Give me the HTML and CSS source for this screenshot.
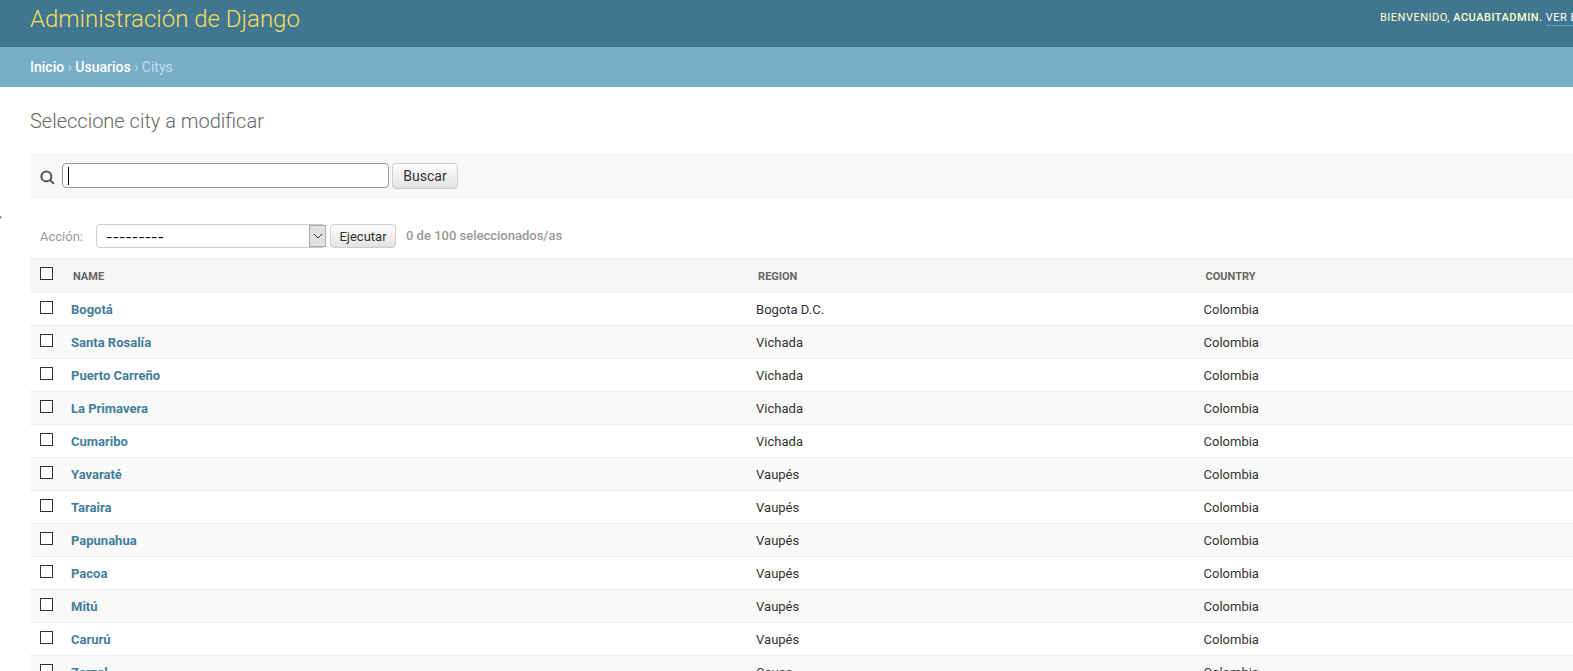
FILE: index.html
```html
<!DOCTYPE html>
<html lang="es">
<head>
<meta charset="utf-8">
<title>Seleccione city a modificar</title>
<link rel="stylesheet" href="styles.css">
</head>
<body>
<header class="header">
  <div class="site-name">Administración de Django</div>
  <div class="user-tools">Bienvenido, <strong>acuabitadmin.</strong> <a href="#">Ver el sitio</a></div>
</header>
<nav class="breadcrumbs"><a href="#">Inicio</a> › <a href="#">Usuarios</a> › Citys</nav>
<main class="content">
  <h1 class="title">Seleccione city a modificar</h1>
  <form class="toolbar">
    <label class="search-label" for="searchbar" aria-label="Buscar">
      <svg class="search-icon" viewBox="0 0 16 16" aria-hidden="true"><circle cx="6.8" cy="6.8" r="5.3"/><path d="M10.5 10.5l4.3 4.3"/></svg>
    </label>
    <span class="search-field">
      <input class="search-input" id="searchbar" type="text">
      <span class="caret"></span>
    </span>
    <button class="button search-button" type="button">Buscar</button>
  </form>
  <div class="actions">
    <label class="action-label" for="action">Acción:</label>
    <span class="select-wrap">
      <select class="action-select" id="action"><option>---------</option></select>
      <span class="select-arrow"><svg viewBox="0 0 10 6" aria-hidden="true"><path d="M1 1l4 4 4-4"/></svg></span>
    </span>
    <button class="button run-button" type="button">Ejecutar</button>
    <span class="counter">0 de 100 seleccionados/as</span>
  </div>
  <table class="results">
    <colgroup><col class="col-check"><col class="col-name"><col class="col-region"><col></colgroup>
    <thead>
      <tr><th><input class="check" type="checkbox" aria-label="Seleccionar todo"></th><th>Name</th><th>Region</th><th>Country</th></tr>
    </thead>
    <tbody>
      <tr><td><input class="check" type="checkbox" aria-label="Bogotá"></td><th><a href="#">Bogotá</a></th><td>Bogota D.C.</td><td>Colombia</td></tr>
      <tr><td><input class="check" type="checkbox" aria-label="Santa Rosalía"></td><th><a href="#">Santa Rosalía</a></th><td>Vichada</td><td>Colombia</td></tr>
      <tr><td><input class="check" type="checkbox" aria-label="Puerto Carreño"></td><th><a href="#">Puerto Carreño</a></th><td>Vichada</td><td>Colombia</td></tr>
      <tr><td><input class="check" type="checkbox" aria-label="La Primavera"></td><th><a href="#">La Primavera</a></th><td>Vichada</td><td>Colombia</td></tr>
      <tr><td><input class="check" type="checkbox" aria-label="Cumaribo"></td><th><a href="#">Cumaribo</a></th><td>Vichada</td><td>Colombia</td></tr>
      <tr><td><input class="check" type="checkbox" aria-label="Yavaraté"></td><th><a href="#">Yavaraté</a></th><td>Vaupés</td><td>Colombia</td></tr>
      <tr><td><input class="check" type="checkbox" aria-label="Taraira"></td><th><a href="#">Taraira</a></th><td>Vaupés</td><td>Colombia</td></tr>
      <tr><td><input class="check" type="checkbox" aria-label="Papunahua"></td><th><a href="#">Papunahua</a></th><td>Vaupés</td><td>Colombia</td></tr>
      <tr><td><input class="check" type="checkbox" aria-label="Pacoa"></td><th><a href="#">Pacoa</a></th><td>Vaupés</td><td>Colombia</td></tr>
      <tr><td><input class="check" type="checkbox" aria-label="Mitú"></td><th><a href="#">Mitú</a></th><td>Vaupés</td><td>Colombia</td></tr>
      <tr><td><input class="check" type="checkbox" aria-label="Carurú"></td><th><a href="#">Carurú</a></th><td>Vaupés</td><td>Colombia</td></tr>
      <tr><td><input class="check" type="checkbox" aria-label="Zarzal"></td><th><a href="#">Zarzal</a></th><td>Cauca</td><td>Colombia</td></tr>
    </tbody>
  </table>
</main>
<svg class="pointer" viewBox="0 0 3 4" aria-hidden="true"><path d="M0 .5L2 2.5V3.5H0"/></svg>
</body>
</html>
```
FILE: styles.css
```css
* { box-sizing: border-box; }
html, body { height: 100%; }
body {
  margin: 0;
  overflow: hidden;
  background: #fff;
  color: #333;
  font: 13px/16px Roboto, "Liberation Sans", sans-serif;
}
a { color: #447e9b; text-decoration: none; }

.header {
  display: flex;
  justify-content: space-between;
  align-items: flex-start;
  padding: 4px 0 13px 30px;
  background: #417690;
  color: #ffc;
}
.site-name { color: #f5dd5d; font-size: 24px; font-weight: 300; line-height: 30px; }
.user-tools {
  flex: 0 0 193px;
  overflow: hidden;
  padding: 6px 0 2px;
  font-size: 11px;
  letter-spacing: 0.5px;
  text-transform: uppercase;
  white-space: nowrap;
}
.user-tools strong { font-weight: 500; }
.user-tools a { padding-bottom: 1px; color: #fff; border-bottom: 1px solid rgba(255, 255, 255, 0.25); }

.breadcrumbs { padding: 12px 30px; background: #79aec8; color: #c4dce8; font-size: 14px; }
.breadcrumbs a { color: #fff; font-weight: 500; }

.content { padding: 22px 0 0 30px; }
.title { margin: 0 0 21px; color: #666; font-size: 20px; font-weight: 300; line-height: 24px; }

.toolbar {
  display: flex;
  align-items: flex-start;
  margin: 0 0 26px;
  padding: 8px 10px;
  border-top: 1px solid #eee;
  border-bottom: 1px solid #eee;
  background: #f8f8f8;
}
.search-label { display: flex; width: 22px; padding-top: 7px; }
.search-icon { width: 15px; height: 15px; fill: none; stroke: #555; stroke-width: 2.2; }
.search-field { position: relative; display: flex; margin-right: 3px; }
.search-input {
  width: 327px;
  height: 25px;
  padding: 2px 5px;
  border: 1px solid #999;
  border-radius: 4px;
  background: #fff;
  font: inherit;
}
.caret { position: absolute; top: 4px; left: 6px; width: 1px; height: 18px; background: #000; }
.button {
  width: 66px;
  padding: 0;
  border: 1px solid #ccc;
  border-radius: 4px;
  background: linear-gradient(#fff, #e2e2e2);
  color: #333;
  font-family: inherit;
}
.search-button { height: 26px; font-size: 14px; }
.run-button { height: 24px; font-size: 13px; }

.actions { display: flex; align-items: center; padding: 0 10px 10px; color: #999; }
.action-label { width: 56px; padding-top: 2px; }
.select-wrap { position: relative; display: flex; margin-right: 4px; }
.action-select {
  appearance: none;
  width: 230px;
  height: 24px;
  padding: 0 24px 0 9px;
  border: 1px solid #ccc;
  border-radius: 4px;
  background: #fff;
  color: #000;
  font: 14px Inter, sans-serif;
}
.select-arrow {
  position: absolute;
  top: 1px;
  right: 0;
  bottom: 1px;
  display: grid;
  place-items: center;
  width: 17px;
  border: 1px solid #aaa;
  background: #e1e1e1;
  pointer-events: none;
}
.select-arrow svg { width: 10px; height: 6px; fill: none; stroke: #333; }
.counter { margin-left: 10px; font-weight: 500; }

.results { width: 100%; border-collapse: separate; border-spacing: 0; table-layout: fixed; }
.col-check { width: 33px; }
.col-name { width: 44.4%; }
.col-region { width: 29%; }
.results th, .results td {
  height: 33px;
  padding: 9px 8px 7px;
  border-bottom: 1px solid #eee;
  text-align: left;
  vertical-align: top;
}
.results thead th {
  height: 35px;
  padding: 10px 10px 7px;
  border-top: 1px solid #eee;
  background: #f6f6f6;
  color: #666;
  font-size: 11px;
  font-weight: 700;
  text-transform: uppercase;
}
.results tbody tr:nth-child(even) { background: #f9f9f9; }
.results tr > :first-child { padding: 8px 10px; line-height: 0; }
.check {
  appearance: none;
  width: 13px;
  height: 13px;
  margin: 0;
  border: 1px solid #333;
  background: #fff;
}

.pointer { position: absolute; top: 215px; left: 0; width: 2px; height: 4px; fill: none; stroke: #334; }
```
